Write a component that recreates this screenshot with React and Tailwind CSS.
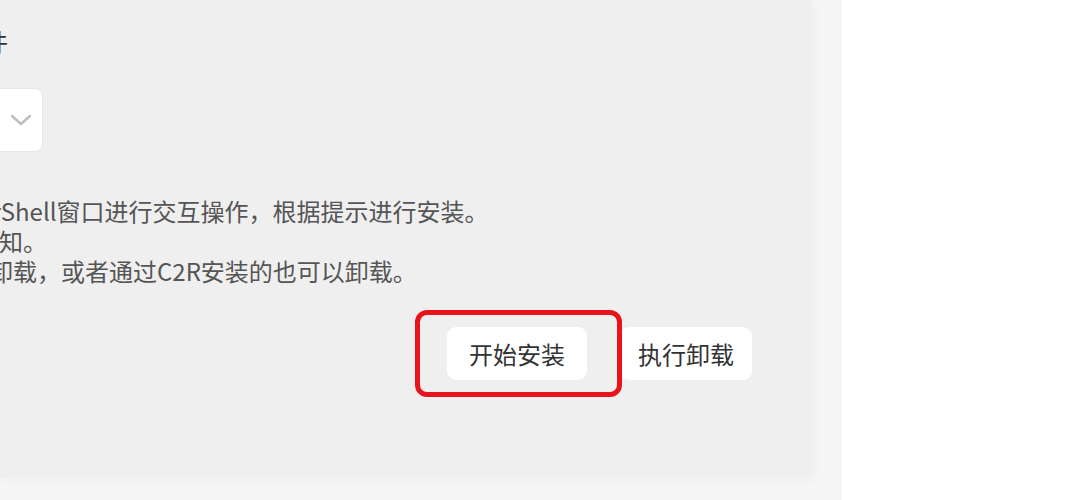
const FONT = { fontFamily: '"Noto Sans CJK SC", "Noto Sans", sans-serif' };

export default function App() {
  return (
    <div className="flex h-[500px] w-[1080px] overflow-hidden bg-white" style={FONT}>
      <div className="h-full w-[842px] shrink-0 bg-[#f5f5f5]">
        <div className="h-[478px] w-[812px] bg-[#efefef] shadow-[2px_2px_10px_rgba(0,0,0,0.03)]">
          {/* section label, cut off at the left */}
          <div className="-ml-[40px] whitespace-nowrap pt-[26px] text-[24px] leading-[30px] text-[#333]">组件</div>

          {/* select */}
          <div className="-ml-[157px] mt-[32px] flex h-[64px] w-[200px] items-center justify-end rounded-[8px] border border-[#e6e6e6] bg-white pr-[10px]">
            <svg width="22" height="12" viewBox="0 0 22 12" fill="none" stroke="#bdbdbd" strokeWidth="2.4" strokeLinecap="round" strokeLinejoin="round">
              <polyline points="2,2 11,10 20,2" />
            </svg>
          </div>

          {/* notes */}
          <div className="mt-[44px] whitespace-nowrap text-[24px] leading-[30px] text-[#555]">
            <div className="-ml-[70px]">PowerShell窗口进行交互操作，根据提示进行安装。</div>
            <div className="-ml-[25px]">通知。</div>
            <div className="-ml-[11px]">卸载，或者通过C2R安装的也可以卸载。</div>
          </div>

          {/* actions */}
          <div className="mt-[41px] flex justify-end gap-[33px] pr-[60px]">
            <div className="relative">
              <button className="h-[53px] w-[140px] rounded-[9px] bg-white text-[24px] text-[#333]">开始安装</button>
              <div className="pointer-events-none absolute -left-[32px] -top-[17px] h-[87px] w-[207px] rounded-[12px] border-[5px] border-[#e8131b]" />
            </div>
            <button className="h-[53px] w-[132px] rounded-[9px] bg-white text-[24px] text-[#333]">执行卸载</button>
          </div>
        </div>
      </div>
      <div className="flex-1" />
    </div>
  );
}
